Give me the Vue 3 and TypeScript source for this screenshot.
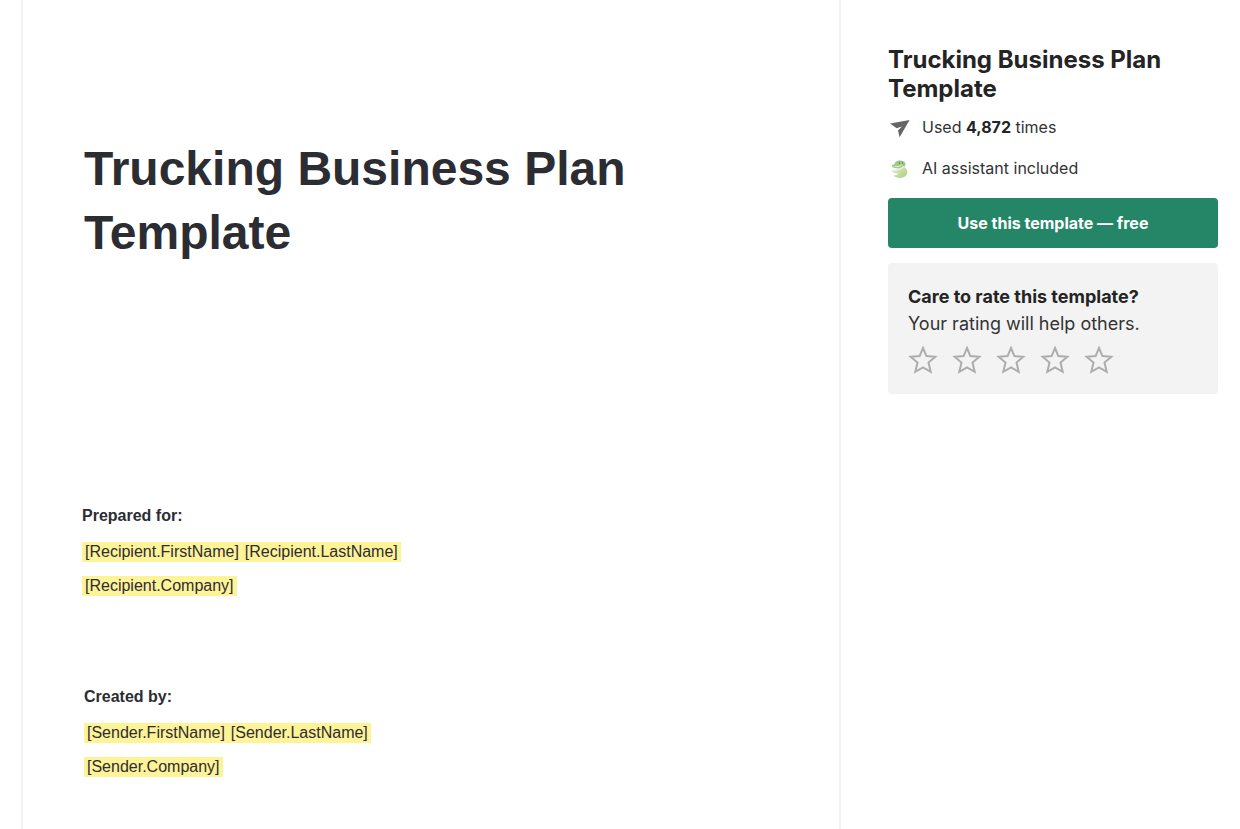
<script setup lang="ts">
import { ref } from 'vue'

interface Party {
  id: string
  heading: string
  rows: string[][]
}

const title = 'Trucking Business Plan Template'
const uses = '4,872'
const rating = ref(0)

const parties: Party[] = [
  {
    id: 'recipient',
    heading: 'Prepared for:',
    rows: [['[Recipient.FirstName]', '[Recipient.LastName]'], ['[Recipient.Company]']],
  },
  {
    id: 'sender',
    heading: 'Created by:',
    rows: [['[Sender.FirstName]', '[Sender.LastName]'], ['[Sender.Company]']],
  },
]
</script>

<template>
  <div class="page">
    <main class="document">
      <h1 class="doc-title">{{ title }}</h1>
      <section v-for="party in parties" :key="party.id" class="party" :class="party.id">
        <h2 class="party-heading">{{ party.heading }}</h2>
        <p v-for="(row, i) in party.rows" :key="i" class="row">
          <span v-for="token in row" :key="token" class="token">{{ token }}</span>
        </p>
      </section>
    </main>

    <aside class="sidebar">
      <h2 class="side-title">{{ title }}</h2>
      <p class="fact">
        <svg class="fact-icon" viewBox="0 0 24 24" aria-hidden="true">
          <path d="M2.2 7.6 21.6 4 11.6 21.2 10 14.6 13.8 10.4 8.6 12.2Z" fill="#656565" />
        </svg>
        <span>Used <strong>{{ uses }}</strong> times</span>
      </p>
      <p class="fact">
        <svg class="fact-icon" viewBox="0 0 24 24" aria-hidden="true">
          <defs>
            <linearGradient id="tail" x1="0" y1="0" x2="1" y2="1">
              <stop offset="0" stop-color="#e3edd0" />
              <stop offset="1" stop-color="#a9d076" />
            </linearGradient>
          </defs>
          <path d="M4 7.8C6 8 6.6 6.6 7.2 5.4 8.6 3 14.6 2.8 16.6 5c1.6 1.8.8 4.4-1.2 5.4C12 12.2 6.6 12 4 9.6Z" fill="#9ccb86" />
          <path d="M3.4 13.8c3 .6 8.600-.4 12.800-3.800 3.600 1.600 4.200 6.600 1.400 9-3.400 2.800-9.800 2.400-12.400-.6 2.400 0 4.200-.8 5.400-2-2.800.2-5.600-.6-7.200-2.600Z" fill="url(#tail)" />
          <path d="M3.600 12.900c4.600.7 8.600-.5 12.400-3.400" fill="none" stroke="#f0ebe6" stroke-width="1.300" />
          <path d="M6.500 9.200c2.600.8 5.200.3 7.400-1.300" fill="none" stroke="#d6e8c6" stroke-width="1.200" />
          <path d="M11.500 4.800v2.400M14.500 5v2" stroke="#668b68" stroke-width="1" />
        </svg>
        <span>AI assistant included</span>
      </p>
      <button type="button" class="use">Use this template — free</button>
      <section class="rate">
        <h3 class="rate-heading">Care to rate this template?</h3>
        <p class="rate-text">Your rating will help others.</p>
        <div class="stars" role="group" aria-label="Rating">
          <button
            v-for="n in 5"
            :key="n"
            type="button"
            class="star"
            :class="{ active: n <= rating }"
            :aria-label="`Rate ${n} of 5`"
            @click="rating = n"
          >
            <svg viewBox="0 0 30 30" aria-hidden="true">
              <path d="M15 3 18.4 11.1 27.3 11.8 20.5 17.5 22.7 26.800 15 22.300 7.300 26.800 9.500 17.500 2.700 11.800 11.600 11.100Z" />
            </svg>
          </button>
        </div>
      </section>
    </aside>
  </div>
</template>

<style>
body {
  margin: 0;
  background: #fff;
}
</style>

<style scoped>
* {
  box-sizing: border-box;
}

h1, h2, h3, p {
  margin: 0;
}

.page {
  display: flex;
  gap: 47px;
  min-height: 100vh;
  padding: 0 22px 0 21px;
  color: #242424;
  font-family: Inter, "Liberation Sans", sans-serif;
}

.document {
  flex: 1;
  min-width: 0;
  padding: 137px 60px 52px 59px;
  border: solid #f2f2f2;
  border-width: 0 2px;
  color: #2b2d33;
  font-family: "Liberation Sans", Arial, sans-serif;
}

.doc-title {
  max-width: 600px;
  margin-bottom: 241px;
  padding-left: 2px;
  font-size: 48px;
  line-height: 64px;
}

.party + .party {
  margin-top: 91px;
  padding-left: 2px;
}

.party-heading {
  margin-bottom: 16px;
  font-size: 16px;
  line-height: 20px;
}

.row {
  display: flex;
  font-size: 16px;
  line-height: 20px;
}

.row + .row {
  margin-top: 14px;
}

.token {
  padding: 0 3px;
  background: #fff398;
}

.sidebar {
  flex: 0 0 330px;
  padding-top: 45px;
}

.side-title {
  margin-bottom: 12px;
  font-size: 24px;
  font-weight: 700;
  line-height: 29px;
}

.fact {
  display: flex;
  align-items: center;
  gap: 10px;
  margin-bottom: 16px;
  font-size: 16px;
  line-height: 25px;
  color: #333;
}

.fact strong {
  color: #242424;
}

.fact-icon {
  width: 24px;
  height: 24px;
}

.use {
  display: block;
  width: 100%;
  height: 50px;
  margin-top: 17px;
  border: 0;
  border-radius: 4px;
  background: #248567;
  color: #fff;
  font: 700 16px/24px Inter, "Liberation Sans", sans-serif;
  cursor: pointer;
}

.rate {
  margin-top: 15px;
  padding: 20px 20px 19px;
  border-radius: 4px;
  background: #f3f3f3;
}

.rate-heading,
.rate-text {
  font-size: 18px;
  line-height: 27px;
}

.rate-text {
  color: #333;
}

.stars {
  display: flex;
  gap: 14px;
  margin-top: 8px;
}

.star {
  width: 30px;
  height: 30px;
  padding: 0;
  border: 0;
  background: none;
  cursor: pointer;
}

.star svg {
  display: block;
  width: 30px;
  height: 30px;
  fill: none;
  stroke: #adadad;
  stroke-width: 2;
}

.star.active svg {
  fill: #adadad;
}
</style>
